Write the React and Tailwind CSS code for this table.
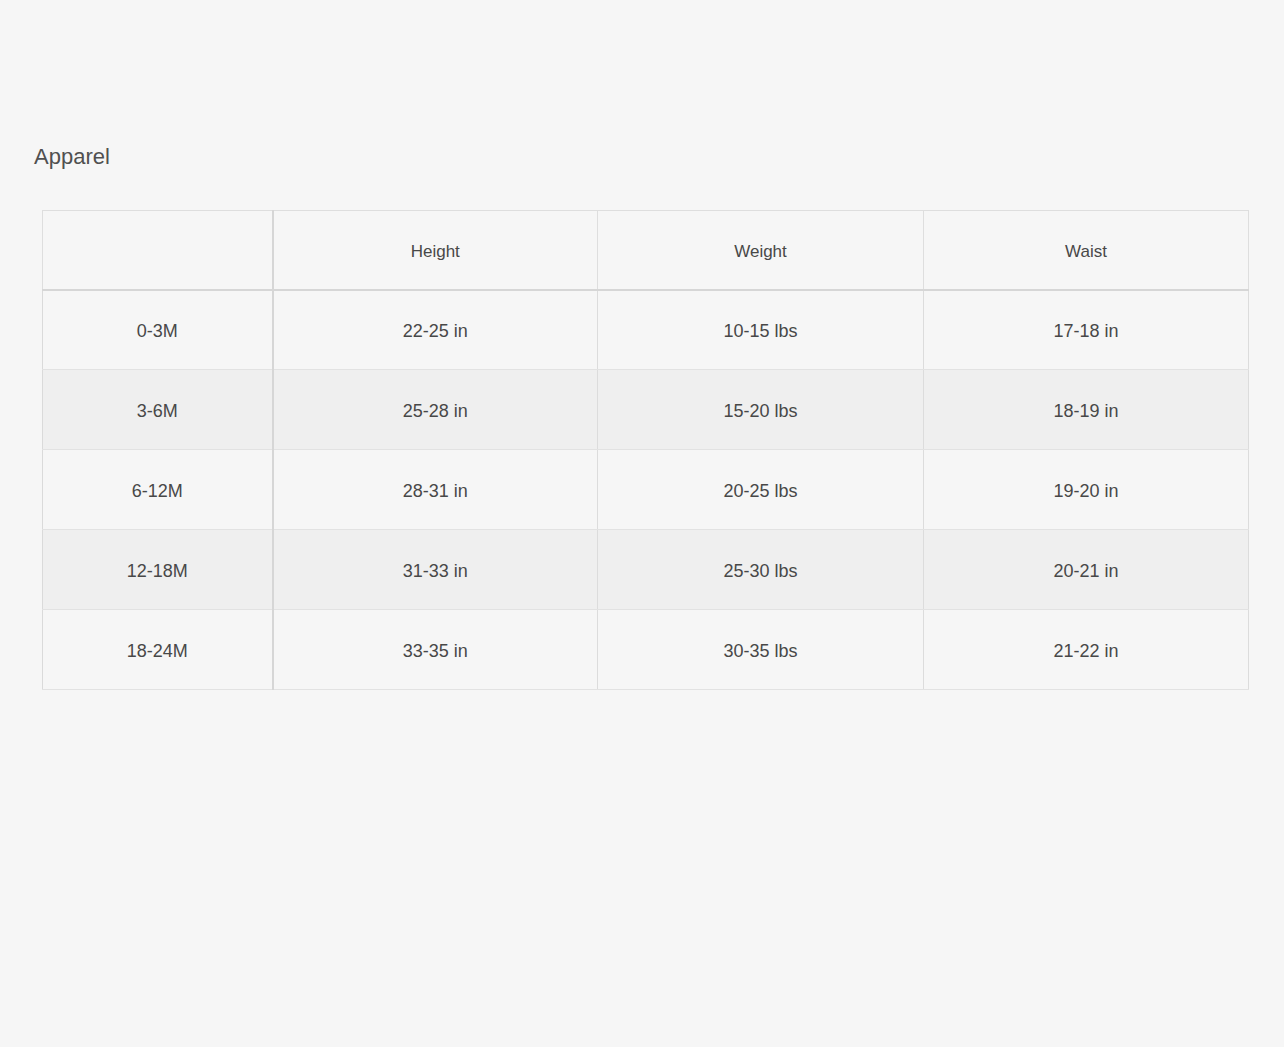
import React from "react";

const rows = [
  ["0-3M", "22-25 in", "10-15 lbs", "17-18 in"],
  ["3-6M", "25-28 in", "15-20 lbs", "18-19 in"],
  ["6-12M", "28-31 in", "20-25 lbs", "19-20 in"],
  ["12-18M", "31-33 in", "25-30 lbs", "20-21 in"],
  ["18-24M", "33-35 in", "30-35 lbs", "21-22 in"],
];

export default function App() {
  return (
    <div className="min-h-[1047px] w-full bg-[#f6f6f6] pt-[142px] pl-[34px] pr-[35px] text-[#484848]" style={{ fontFamily: '"Liberation Sans", Arial, sans-serif' }}>
      <h2 className="text-[22px] leading-[30px] text-[#505050]">Apparel</h2>
      <div className="mt-[38px] ml-[8px] w-[1206px]">
        <table className="w-full table-fixed border-collapse text-[18px]">
          <colgroup>
            <col className="w-[230px]" />
            <col className="w-[325px]" />
            <col className="w-[326px]" />
            <col className="w-[325px]" />
          </colgroup>
          <thead>
            <tr className="h-[79px] text-[17px]">
              <th className="border border-[#dedede] border-b-2 border-b-[#d6d6d6] border-r-2 border-r-[#d6d6d6] pt-[4px] font-normal"></th>
              <th className="border border-[#dedede] border-b-2 border-b-[#d6d6d6] pt-[4px] font-normal">Height</th>
              <th className="border border-[#dedede] border-b-2 border-b-[#d6d6d6] pt-[4px] font-normal">Weight</th>
              <th className="border border-[#dedede] border-b-2 border-b-[#d6d6d6] pt-[4px] font-normal">Waist</th>
            </tr>
          </thead>
          <tbody>
            {rows.map((r, i) => (
              <tr key={i} className={i % 2 === 1 ? "h-[80px] bg-[#efefef]" : "h-[80px] bg-[#f6f6f6]"}>
                {r.map((c, j) => (
                  <td
                    key={j}
                    className={
                      j === 0
                        ? "border border-[#e2e2e2] border-r-2 border-r-[#d6d6d6] border-l-[#dadada] pt-[4px] text-center"
                        : "border border-[#e2e2e2] border-x-[#dcdcdc] pt-[4px] text-center"
                    }
                  >
                    {c}
                  </td>
                ))}
              </tr>
            ))}
          </tbody>
        </table>
      </div>
    </div>
  );
}
